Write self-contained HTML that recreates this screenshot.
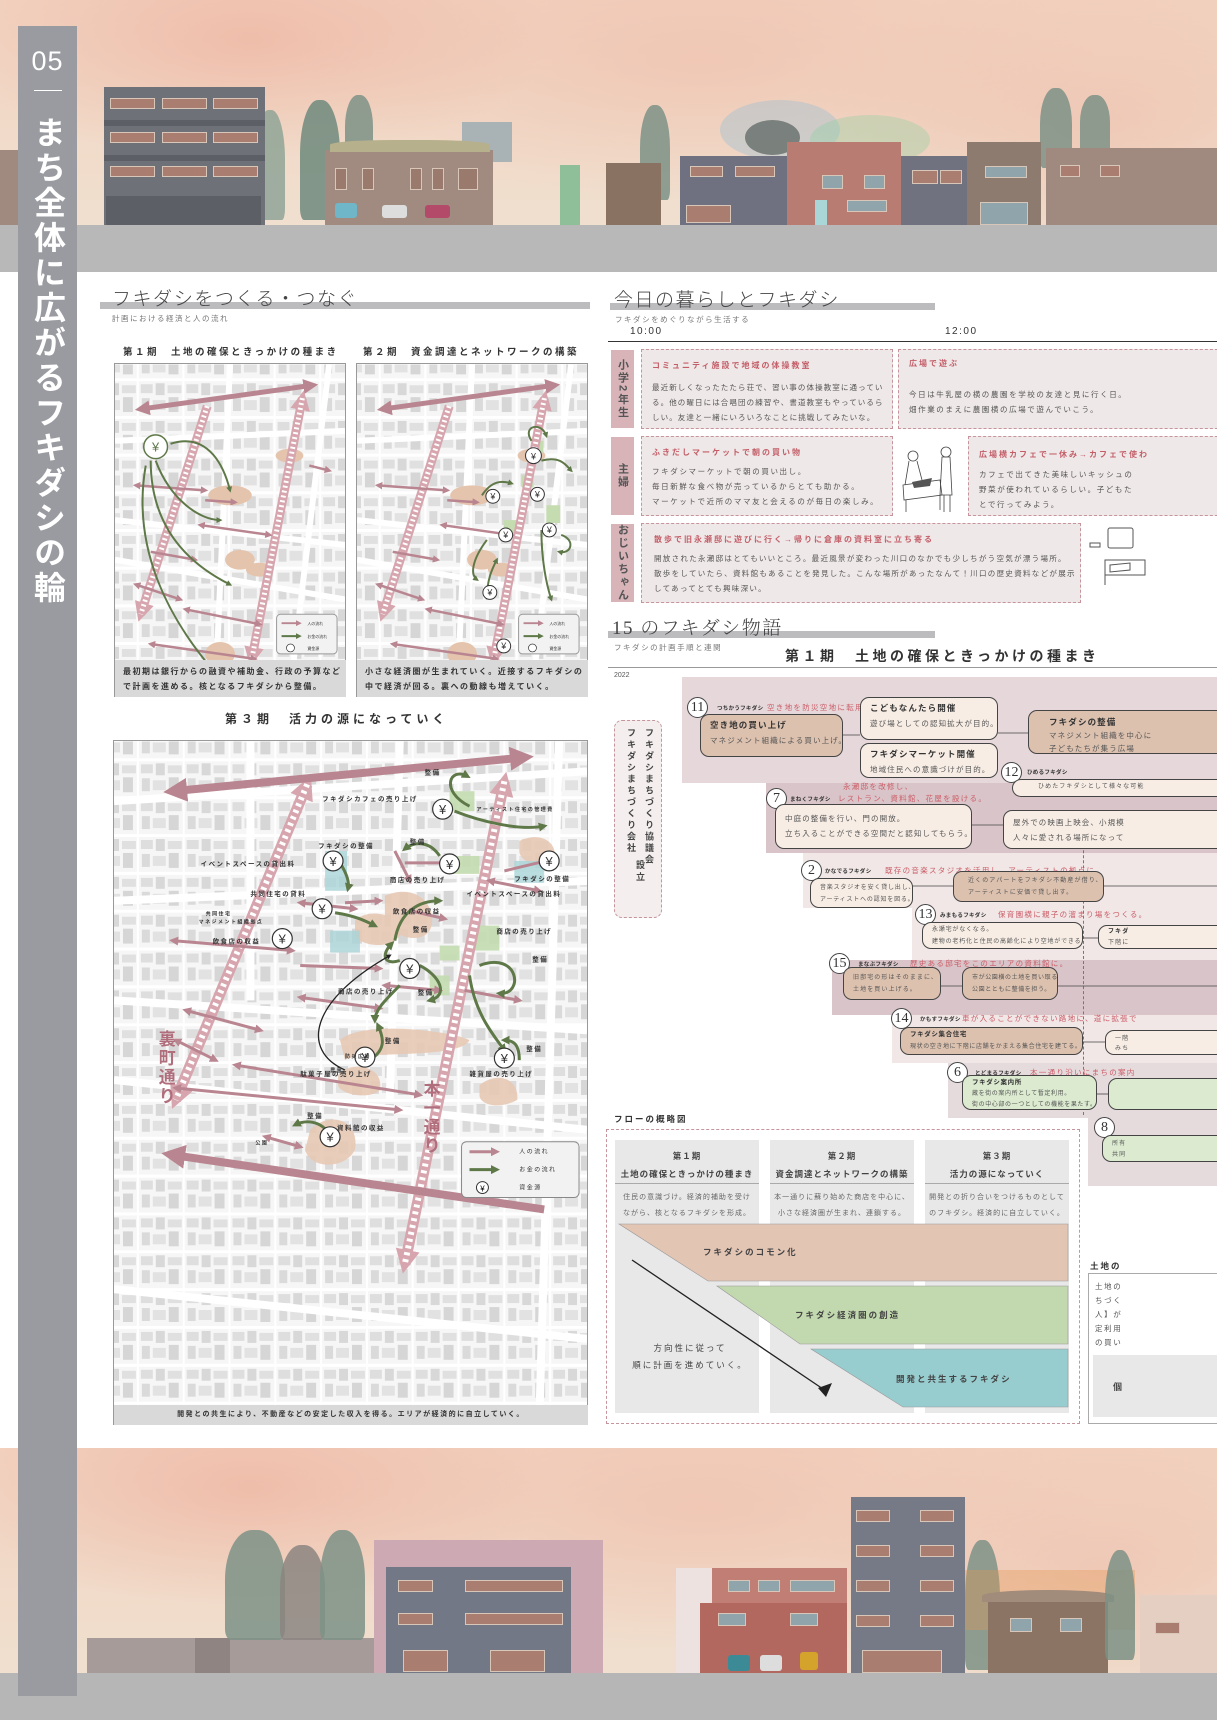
<!DOCTYPE html>
<html><head><meta charset="utf-8">
<style>
*{margin:0;padding:0;box-sizing:border-box}
html,body{width:1217px;height:1720px;overflow:hidden;background:#fff}
body{position:relative;font-family:"Liberation Sans","Noto Sans CJK JP",sans-serif;color:#333}
.a{position:absolute}
.sky{position:absolute;left:0;width:1217px;background:
radial-gradient(ellipse 300px 120px at 250px 40px,rgba(236,170,150,.55),transparent),
radial-gradient(ellipse 400px 140px at 700px 60px,rgba(238,185,165,.5),transparent),
radial-gradient(ellipse 300px 150px at 1100px 120px,rgba(236,175,155,.4),transparent),
linear-gradient(#f2d2c0,#f1dccb 60%,#efe2d2)}
.bld{position:absolute}
.win{position:absolute;background:#a97e70;border:1px solid #d8c6b8}
.tree{position:absolute;border-radius:45% 45% 10% 10%;background:#7d9286;opacity:.85}
.side{position:absolute;left:18px;top:26px;width:59px;height:1670px;background:#999ba0;color:#fff;text-align:center}
.h2{position:absolute;font-size:19px;letter-spacing:1.5px;color:#444;font-weight:300;white-space:nowrap}
.bar{position:absolute;height:7px;background:#bcbcbf}
.sub{position:absolute;font-size:7.5px;color:#777;letter-spacing:1.5px;white-space:nowrap}
.t{position:absolute;white-space:nowrap}
.lab{position:absolute;width:23px;background:#d8b4b9;color:#555;font-size:11px;font-weight:bold;writing-mode:vertical-rl;display:flex;align-items:center;justify-content:center;letter-spacing:2px}
.db{position:absolute;border:1px dashed #c5949c;background:#efe8e8}
.db .hd{position:absolute;color:#c35e68;font-size:8px;letter-spacing:2px;font-weight:bold;white-space:nowrap}
.db .bd{position:absolute;color:#555;font-size:7.5px;letter-spacing:1.6px;line-height:15px;white-space:nowrap}
.bx{position:absolute;border:1.2px solid #444;border-radius:9px;font-size:7.5px;color:#555;letter-spacing:1.1px;line-height:15px;padding:3px 0 0 9px;white-space:nowrap;overflow:hidden}
.br{background:#dcc1af}.cr{background:#f7ede5}.gr{background:#dcebd0}
.bx b{color:#333;font-size:8.5px}
.num{position:absolute;width:21px;height:21px;border:1px solid #444;border-radius:50%;background:#fff;font-family:"Liberation Serif",serif;font-size:14px;text-align:center;line-height:19px;color:#333}
.nm{position:absolute;font-size:5.5px;font-weight:bold;color:#333;letter-spacing:.3px;white-space:nowrap}
.rd{position:absolute;font-size:7.5px;color:#cc5d68;letter-spacing:1.3px;white-space:nowrap}
.band{position:absolute}
.mt{position:absolute;font-size:9.5px;font-weight:bold;letter-spacing:2.5px;color:#333;white-space:nowrap}
.cap{position:absolute;background:#d9d9d9;font-size:8px;font-weight:bold;letter-spacing:1.5px;line-height:15px;padding:4px 8px;color:#333;white-space:nowrap}
.col{position:absolute;background:#e8e8e9;top:1140px;height:273px;width:144px;text-align:center}
.col .h{font-size:8.5px;letter-spacing:1px;font-weight:bold;color:#444;line-height:18px;padding-top:7px;height:44px;border-bottom:1px solid #aaa;white-space:nowrap}
.col .p{font-size:7px;letter-spacing:1px;color:#666;line-height:16px;padding-top:6px;white-space:nowrap}
</style></head><body>

<svg width="0" height="0" style="position:absolute">
<defs>
<pattern id="blk" width="46" height="38" patternUnits="userSpaceOnUse">
<rect width="46" height="38" fill="#f6f6f6"/>
<rect x="2" y="3" width="12" height="9" fill="#dedede"/><rect x="17" y="2" width="9" height="12" fill="#d8d8d8"/>
<rect x="29" y="4" width="14" height="8" fill="#e0e0e0"/><rect x="3" y="17" width="8" height="13" fill="#dadada"/>
<rect x="14" y="19" width="13" height="10" fill="#e2e2e2"/><rect x="30" y="16" width="10" height="15" fill="#d6d6d6"/>
<rect x="0" y="35" width="46" height="3" fill="#fff"/><rect x="44" y="0" width="2" height="38" fill="#fff"/>
</pattern>
<marker id="pa" viewBox="0 0 10 10" refX="6" refY="5" markerWidth="3" markerHeight="3" orient="auto-start-reverse"><path d="M0,0L10,5L0,10z" fill="#b98590"/></marker>
<marker id="ga" viewBox="0 0 10 10" refX="6" refY="5" markerWidth="3" markerHeight="3" orient="auto-start-reverse"><path d="M0,0L10,5L0,10z" fill="#5e7848"/></marker>
<marker id="da" viewBox="0 0 10 10" refX="6" refY="5" markerWidth="2.2" markerHeight="2.6" orient="auto-start-reverse"><path d="M0,0L10,5L0,10z" fill="#d7a5ae"/></marker>
<marker id="ka" viewBox="0 0 10 10" refX="6" refY="5" markerWidth="4" markerHeight="4" orient="auto"><path d="M0,0L10,5L0,10z" fill="#222"/></marker>
</defs></svg>

<!-- TOP BANNER -->
<div class="sky" style="top:0;height:272px"></div>
<div class="a" style="left:0;top:225px;width:1217px;height:47px;background:#b8b8b8"></div>
<div class="tree" style="left:255px;top:110px;width:30px;height:110px;background:#8fa497"></div>
<div class="tree" style="left:300px;top:100px;width:40px;height:120px;background:#6f8a7c"></div>
<div class="tree" style="left:345px;top:95px;width:28px;height:70px"></div>
<div class="bld" style="left:104px;top:87px;width:161px;height:138px;background:#6f7179"></div>
<div class="bld" style="left:104px;top:120px;width:161px;height:6px;background:#5d5f66"></div>
<div class="bld" style="left:104px;top:155px;width:161px;height:6px;background:#5d5f66"></div>
<div class="win" style="left:110px;top:98px;width:45px;height:11px"></div><div class="win" style="left:162px;top:98px;width:45px;height:11px"></div><div class="win" style="left:213px;top:98px;width:45px;height:11px"></div>
<div class="win" style="left:110px;top:132px;width:45px;height:11px"></div><div class="win" style="left:162px;top:132px;width:45px;height:11px"></div><div class="win" style="left:213px;top:132px;width:45px;height:11px"></div>
<div class="win" style="left:110px;top:166px;width:45px;height:11px"></div><div class="win" style="left:162px;top:166px;width:45px;height:11px"></div><div class="win" style="left:213px;top:166px;width:45px;height:11px"></div>
<div class="bld" style="left:106px;top:196px;width:155px;height:29px;background:#5d5f67"></div>
<div class="bld" style="left:462px;top:122px;width:50px;height:40px;background:#a9b2b5"></div>
<div class="bld" style="left:325px;top:150px;width:168px;height:75px;background:#a18b80"></div>
<div class="bld" style="left:330px;top:140px;width:160px;height:12px;background:#b7b08c;border-radius:40% 40% 0 0"></div>
<div class="win" style="left:335px;top:168px;width:12px;height:22px;background:#9b7a6e"></div><div class="win" style="left:362px;top:168px;width:12px;height:22px;background:#9b7a6e"></div><div class="win" style="left:410px;top:168px;width:12px;height:22px;background:#9b7a6e"></div><div class="win" style="left:432px;top:168px;width:12px;height:22px;background:#9b7a6e"></div><div class="win" style="left:458px;top:168px;width:20px;height:22px;background:#9b7a6e"></div>
<div class="bld" style="left:335px;top:203px;width:22px;height:15px;background:#6fb6c8;border-radius:3px"></div>
<div class="bld" style="left:382px;top:205px;width:25px;height:13px;background:#ddd;border-radius:3px"></div>
<div class="bld" style="left:425px;top:205px;width:25px;height:13px;background:#b44a6a;border-radius:3px"></div>
<div class="bld" style="left:560px;top:165px;width:20px;height:60px;background:#8fbf98"></div>
<div class="a" style="left:720px;top:100px;width:120px;height:60px;border-radius:50%;background:rgba(140,190,215,.35)"></div>
<div class="a" style="left:810px;top:115px;width:120px;height:50px;border-radius:50%;background:rgba(140,210,160,.35)"></div>
<div class="tree" style="left:745px;top:120px;width:55px;height:35px;border-radius:50%;background:#6b7370"></div>
<div class="tree" style="left:640px;top:105px;width:30px;height:95px"></div>
<div class="tree" style="left:1040px;top:88px;width:32px;height:80px"></div>
<div class="tree" style="left:1080px;top:95px;width:30px;height:60px"></div>
<div class="bld" style="left:606px;top:163px;width:55px;height:62px;background:#8a7262"></div>
<div class="bld" style="left:680px;top:156px;width:107px;height:69px;background:#6f7180"></div>
<div class="win" style="left:690px;top:166px;width:33px;height:11px"></div><div class="win" style="left:735px;top:166px;width:40px;height:11px"></div>
<div class="win" style="left:686px;top:205px;width:45px;height:18px"></div>
<div class="bld" style="left:787px;top:142px;width:114px;height:83px;background:#b97c73"></div>
<div class="win" style="left:822px;top:175px;width:21px;height:14px;background:#8fa5ab"></div><div class="win" style="left:864px;top:175px;width:21px;height:14px;background:#8fa5ab"></div>
<div class="win" style="left:847px;top:200px;width:40px;height:12px;background:#8fa5ab"></div>
<div class="bld" style="left:815px;top:200px;width:12px;height:25px;background:#a9d6d6"></div>
<div class="bld" style="left:901px;top:156px;width:66px;height:69px;background:#707280"></div>
<div class="win" style="left:912px;top:170px;width:26px;height:14px"></div><div class="win" style="left:940px;top:170px;width:22px;height:14px"></div>
<div class="bld" style="left:967px;top:142px;width:74px;height:83px;background:#8c7b6e"></div>
<div class="win" style="left:985px;top:166px;width:42px;height:12px;background:#8fa5ab"></div>
<div class="win" style="left:980px;top:202px;width:48px;height:23px;background:#8fa5ab"></div>
<div class="bld" style="left:1046px;top:148px;width:171px;height:77px;background:#a08a80"></div>
<div class="win" style="left:1060px;top:165px;width:20px;height:12px"></div><div class="win" style="left:1100px;top:165px;width:20px;height:12px"></div>
<div class="bld" style="left:0;top:150px;width:18px;height:75px;background:#a08a80"></div>

<!-- BOTTOM BANNER -->
<div class="sky" style="top:1448px;height:272px"></div>
<div class="a" style="left:0;top:1673px;width:1217px;height:47px;background:#b6b6b6"></div>
<div class="bld" style="left:87px;top:1638px;width:300px;height:35px;background:#a69b99"></div>
<div class="bld" style="left:195px;top:1638px;width:35px;height:35px;background:#8f8482"></div>
<div class="tree" style="left:225px;top:1530px;width:60px;height:110px"></div>
<div class="tree" style="left:280px;top:1545px;width:45px;height:95px;background:#8b8580"></div>
<div class="tree" style="left:320px;top:1530px;width:45px;height:110px"></div>
<div class="bld" style="left:374px;top:1540px;width:229px;height:133px;background:#cda9b3"></div>
<div class="bld" style="left:386px;top:1567px;width:185px;height:106px;background:#727886"></div>
<div class="win" style="left:398px;top:1580px;width:35px;height:12px;background:#a97e70"></div><div class="win" style="left:465px;top:1580px;width:98px;height:12px"></div>
<div class="win" style="left:398px;top:1613px;width:35px;height:12px"></div><div class="win" style="left:465px;top:1613px;width:98px;height:12px"></div>
<div class="win" style="left:403px;top:1650px;width:45px;height:22px"></div><div class="win" style="left:490px;top:1650px;width:55px;height:22px"></div>
<div class="bld" style="left:676px;top:1568px;width:36px;height:105px;background:#ede2e0"></div>
<div class="bld" style="left:712px;top:1568px;width:135px;height:105px;background:#c07e74"></div>
<div class="bld" style="left:700px;top:1603px;width:147px;height:70px;background:#b3685f"></div>
<div class="win" style="left:728px;top:1580px;width:22px;height:12px;background:#8fa5ab"></div><div class="win" style="left:758px;top:1580px;width:22px;height:12px;background:#8fa5ab"></div><div class="win" style="left:790px;top:1580px;width:45px;height:12px;background:#8fa5ab"></div>
<div class="win" style="left:718px;top:1613px;width:28px;height:13px;background:#8fa5ab"></div><div class="win" style="left:790px;top:1613px;width:28px;height:13px;background:#8fa5ab"></div>
<div class="bld" style="left:851px;top:1497px;width:114px;height:176px;background:#767a86"></div>
<div class="win" style="left:856px;top:1510px;width:34px;height:12px"></div><div class="win" style="left:920px;top:1510px;width:34px;height:12px"></div>
<div class="win" style="left:856px;top:1545px;width:34px;height:12px"></div><div class="win" style="left:920px;top:1545px;width:34px;height:12px"></div>
<div class="win" style="left:856px;top:1580px;width:34px;height:12px"></div><div class="win" style="left:920px;top:1580px;width:34px;height:12px"></div>
<div class="win" style="left:856px;top:1615px;width:34px;height:12px"></div><div class="win" style="left:920px;top:1615px;width:34px;height:12px"></div>
<div class="win" style="left:862px;top:1650px;width:80px;height:23px"></div>
<div class="tree" style="left:965px;top:1540px;width:35px;height:130px"></div>
<div class="bld" style="left:965px;top:1570px;width:170px;height:60px;background:rgba(230,150,80,.35)"></div>
<div class="bld" style="left:988px;top:1600px;width:120px;height:73px;background:#8b7464"></div>
<div class="bld" style="left:982px;top:1590px;width:132px;height:12px;background:#a18b7a;border-radius:50% 50% 0 0"></div>
<div class="win" style="left:1010px;top:1618px;width:22px;height:14px;background:#8fa5ab"></div><div class="win" style="left:1060px;top:1618px;width:22px;height:14px;background:#8fa5ab"></div>
<div class="tree" style="left:1105px;top:1550px;width:30px;height:110px"></div>
<div class="bld" style="left:1140px;top:1595px;width:77px;height:78px;background:#e4cfc2"></div>
<div class="win" style="left:1155px;top:1622px;width:25px;height:12px"></div>
<div class="a" style="left:728px;top:1655px;width:22px;height:16px;background:#3d8a97;border-radius:3px"></div>
<div class="a" style="left:760px;top:1655px;width:22px;height:16px;background:#ddd;border-radius:3px"></div>
<div class="a" style="left:800px;top:1652px;width:18px;height:18px;background:#d4a32c;border-radius:3px"></div>

<!-- SIDEBAR -->
<div class="side">
<div style="font-size:27px;margin-top:20px;letter-spacing:1px">05</div>
<div style="width:28px;height:1px;background:#fff;margin:13px auto 0"></div>
<div style="writing-mode:vertical-rl;font-size:32px;font-weight:bold;letter-spacing:3px;margin:10px auto 0;line-height:59px;height:520px">まち全体に広がるフキダシの輪</div>
</div>

<!-- LEFT SECTION -->
<div class="bar" style="left:100px;top:302px;width:490px"></div>
<div class="h2" style="left:112px;top:284px">フキダシをつくる・つなぐ</div>
<div class="sub" style="left:112px;top:313px">計画における経済と人の流れ</div>
<div class="mt" style="left:123px;top:344px">第１期　土地の確保ときっかけの種まき</div>
<div class="mt" style="left:363px;top:344px">第２期　資金調達とネットワークの構築</div>

<!-- map1 -->
<svg class="a" style="left:114px;top:363px;border:1px solid #999" width="232" height="334" viewBox="114 363 232 334">
<rect x="114" y="363" width="232" height="334" fill="url(#blk)"/>
<g stroke="#fff" stroke-width="6" fill="none"><path d="M114,440 L346,430"/><path d="M114,520 L346,545"/><path d="M114,560 L346,600"/><path d="M230,363 L215,697"/><path d="M330,363 L290,697"/></g>
<g fill="#e5c4ad"><ellipse cx="230" cy="495" rx="22" ry="10"/><ellipse cx="240" cy="560" rx="15" ry="10"/><ellipse cx="290" cy="455" rx="14" ry="7"/><ellipse cx="220" cy="655" rx="15" ry="12"/><ellipse cx="260" cy="570" rx="14" ry="7"/></g>
<path d="M207,405 L140,615" stroke="#d7a5ae" stroke-width="9" marker-end="url(#da)"/><path d="M207,405 L140,615" stroke="#fff" stroke-width="5" stroke-dasharray="2 3"/>
<path d="M303,397 L252,660" stroke="#d7a5ae" stroke-width="9" marker-end="url(#da)" marker-start="url(#da)"/><path d="M303,397 L252,660" stroke="#fff" stroke-width="5" stroke-dasharray="2 3"/>
<g stroke="#b98590" fill="none"><path d="M140,408 L313,384" stroke-width="5" marker-end="url(#pa)" marker-start="url(#pa)"/>
<g stroke-width="2.5"><path d="M135,485 L205,490" marker-end="url(#pa)" marker-start="url(#pa)"/><path d="M205,500 L235,502" marker-end="url(#pa)"/><path d="M200,525 L270,535" marker-end="url(#pa)" marker-start="url(#pa)"/><path d="M150,552 L195,560" marker-end="url(#pa)"/><path d="M135,585 L180,600" marker-end="url(#pa)" marker-start="url(#pa)"/><path d="M185,610 L260,625" marker-end="url(#pa)" marker-start="url(#pa)"/><path d="M150,645 L255,660" marker-end="url(#pa)" marker-start="url(#pa)"/><path d="M310,465 L330,470" marker-end="url(#pa)"/></g>
<path d="M120,690 L200,680" stroke-width="5" marker-start="url(#pa)"/></g>
<g stroke="#5e7848" stroke-width="2" fill="none"><path d="M170,443 C210,430 225,470 230,490" marker-end="url(#ga)"/><path d="M150,460 C150,520 180,560 230,585" marker-end="url(#ga)"/><path d="M145,465 C130,550 170,620 210,668" marker-end="url(#ga)"/><path d="M155,460 C170,500 200,520 220,520" marker-end="url(#ga)"/></g>
<circle cx="155" cy="446" r="12" fill="#fff" stroke="#5e7848" stroke-width="1.5"/><text x="155" y="451" font-size="13" text-anchor="middle" fill="#5e7848">¥</text>
<rect x="277" y="615" width="61" height="40" rx="4" fill="#f2f2f2" stroke="#999"/>
<path d="M282,624 L300,624" stroke="#b98590" stroke-width="2" marker-end="url(#pa)"/><path d="M282,637 L300,637" stroke="#5e7848" stroke-width="2" marker-end="url(#ga)"/>
<circle cx="291" cy="649" r="4" fill="#fff" stroke="#333" stroke-width=".7"/>
<g font-size="4" fill="#333"><text x="308" y="626">人の流れ</text><text x="308" y="639">お金の流れ</text><text x="308" y="651">資金源</text></g>
</svg>
<div class="cap" style="left:115px;top:660px;width:231px;height:37px">最初期は銀行からの融資や補助金、行政の予算など<br>で計画を進める。核となるフキダシから整備。</div>

<!-- map2 -->
<svg class="a" style="left:356px;top:363px;border:1px solid #999" width="232" height="334" viewBox="114 363 232 334">
<rect x="114" y="363" width="232" height="334" fill="url(#blk)"/>
<g stroke="#fff" stroke-width="6" fill="none"><path d="M114,440 L346,430"/><path d="M114,520 L346,545"/><path d="M114,560 L346,600"/><path d="M230,363 L215,697"/><path d="M330,363 L290,697"/></g>
<g fill="#e5c4ad"><ellipse cx="230" cy="495" rx="22" ry="10"/><ellipse cx="240" cy="560" rx="15" ry="10"/><ellipse cx="290" cy="455" rx="14" ry="7"/><ellipse cx="220" cy="655" rx="15" ry="12"/><ellipse cx="260" cy="570" rx="14" ry="7"/></g>
<g fill="#c5dcb0"><rect x="290" y="440" width="12" height="12"/><rect x="280" y="475" width="12" height="12"/><rect x="305" y="505" width="14" height="18"/><rect x="262" y="520" width="14" height="15"/></g>
<path d="M207,405 L140,615" stroke="#d7a5ae" stroke-width="9" marker-end="url(#da)"/><path d="M207,405 L140,615" stroke="#fff" stroke-width="5" stroke-dasharray="2 3"/>
<path d="M303,397 L252,660" stroke="#d7a5ae" stroke-width="9" marker-end="url(#da)" marker-start="url(#da)"/><path d="M303,397 L252,660" stroke="#fff" stroke-width="5" stroke-dasharray="2 3"/>
<g stroke="#b98590" fill="none"><path d="M140,408 L313,384" stroke-width="5" marker-end="url(#pa)" marker-start="url(#pa)"/>
<g stroke-width="2.5"><path d="M135,485 L205,490" marker-end="url(#pa)" marker-start="url(#pa)"/><path d="M205,500 L235,502" marker-end="url(#pa)"/><path d="M200,525 L270,535" marker-end="url(#pa)" marker-start="url(#pa)"/><path d="M150,552 L195,560" marker-end="url(#pa)"/><path d="M135,585 L180,600" marker-end="url(#pa)" marker-start="url(#pa)"/><path d="M185,610 L260,625" marker-end="url(#pa)" marker-start="url(#pa)"/><path d="M150,645 L255,660" marker-end="url(#pa)" marker-start="url(#pa)"/></g>
<path d="M120,690 L200,680" stroke-width="5" marker-start="url(#pa)"/></g>
<g stroke="#5e7848" stroke-width="2" fill="none"><path d="M290,440 C280,425 300,420 305,435" marker-end="url(#ga)"/><path d="M300,460 C320,455 325,465 330,470" marker-end="url(#ga)"/><path d="M240,495 C250,480 260,480 270,483" marker-end="url(#ga)"/><path d="M245,540 C230,560 228,575 235,580" marker-end="url(#ga)"/><path d="M245,600 C245,580 250,570 255,560" marker-end="url(#ga)"/><path d="M300,530 C300,560 305,585 310,600" marker-end="url(#ga)"/><path d="M320,535 C335,540 330,555 318,552" marker-end="url(#ga)"/></g>
<g fill="#fff" stroke="#333" stroke-width="1"><circle cx="292" cy="455" r="8"/><circle cx="296" cy="494" r="7"/><circle cx="251" cy="496" r="7"/><circle cx="264" cy="535" r="7"/><circle cx="308" cy="530" r="7"/><circle cx="248" cy="593" r="7"/><circle cx="262" cy="647" r="7"/></g>
<g font-size="9" text-anchor="middle" fill="#333"><text x="292" y="459">¥</text><text x="296" y="497">¥</text><text x="251" y="499">¥</text><text x="264" y="538">¥</text><text x="308" y="533">¥</text><text x="248" y="596">¥</text><text x="262" y="650">¥</text></g>
<rect x="277" y="615" width="61" height="40" rx="4" fill="#f2f2f2" stroke="#999"/>
<path d="M282,624 L300,624" stroke="#b98590" stroke-width="2" marker-end="url(#pa)"/><path d="M282,637 L300,637" stroke="#5e7848" stroke-width="2" marker-end="url(#ga)"/>
<circle cx="291" cy="649" r="4" fill="#fff" stroke="#333" stroke-width=".7"/>
<g font-size="4" fill="#333"><text x="308" y="626">人の流れ</text><text x="308" y="639">お金の流れ</text><text x="308" y="651">資金源</text></g>
</svg>
<div class="cap" style="left:357px;top:660px;width:231px;height:37px">小さな経済圏が生まれていく。近接するフキダシの<br>中で経済が回る。裏への動線も増えていく。</div>

<div class="mt" style="left:225px;top:710px;font-size:12px;letter-spacing:4px">第３期　活力の源になっていく</div>

<!-- map3 -->
<svg class="a" style="left:113px;top:740px;border:1px solid #999" width="475" height="685" viewBox="113 740 475 685">
<rect x="113" y="740" width="475" height="685" fill="url(#blk)"/>
<g stroke="#fff" stroke-width="8" fill="none"><path d="M113,800 L588,770"/><path d="M113,900 L588,880"/><path d="M113,1000 L588,1030"/><path d="M113,1080 L588,1130"/><path d="M113,1290 L588,1340"/><path d="M250,740 L250,1000"/><path d="M400,740 L390,1100"/><path d="M560,740 L540,1425"/></g>
<g fill="#e8c9b5" opacity=".9"><path d="M385,895 C420,880 440,910 430,930 C420,945 390,935 385,920z"/><path d="M355,920 C370,905 405,915 400,935 C390,950 360,945 355,935z"/><path d="M340,1040 C360,1020 450,1030 470,1040 C460,1060 360,1050 345,1060z"/><path d="M338,1075 C350,1060 385,1065 380,1090 C370,1100 340,1095 338,1085z"/><path d="M310,1130 C330,1110 360,1120 355,1150 C345,1170 310,1170 305,1150z"/><path d="M480,1085 C500,1070 520,1080 518,1100 C500,1110 480,1105 480,1095z"/><path d="M520,840 C540,830 560,840 555,860 C540,870 520,860 520,850z"/></g>
<g fill="#a9d4d8" opacity=".8"><rect x="325" y="850" width="22" height="40"/><rect x="330" y="930" width="30" height="22"/><rect x="515" y="860" width="30" height="22"/></g>
<g fill="#c4dcb0" opacity=".9"><rect x="450" y="790" width="25" height="20"/><rect x="450" y="855" width="30" height="18"/><rect x="470" y="925" width="30" height="25"/><rect x="430" y="975" width="20" height="20"/><rect x="440" y="945" width="20" height="15"/></g>
<path d="M307,783 L175,1100" stroke="#d7a5ae" stroke-width="11" marker-end="url(#da)" marker-start="url(#da)"/><path d="M307,783 L175,1100" stroke="#fff" stroke-width="6" stroke-dasharray="3 4"/>
<path d="M505,780 L405,1265" stroke="#d7a5ae" stroke-width="11" marker-end="url(#da)" marker-start="url(#da)"/><path d="M505,780 L405,1265" stroke="#fff" stroke-width="6" stroke-dasharray="3 4"/>
<g stroke="#b98590" fill="none">
<path d="M172,790 L525,756" stroke-width="8" marker-end="url(#pa)" marker-start="url(#pa)"/>
<path d="M170,1155 L545,1210" stroke-width="8" marker-start="url(#pa)"/>
<g stroke-width="3"><path d="M175,1088 L400,1110" marker-end="url(#pa)" marker-start="url(#pa)"/><path d="M172,940 L292,950" marker-end="url(#pa)" marker-start="url(#pa)"/><path d="M175,1040 L215,1060" marker-end="url(#pa)" marker-start="url(#pa)"/><path d="M185,1010 L260,1030" marker-end="url(#pa)" marker-start="url(#pa)"/><path d="M235,1065 L420,1095" marker-end="url(#pa)" marker-start="url(#pa)"/><path d="M300,902 L355,908" marker-end="url(#pa)" marker-start="url(#pa)"/><path d="M345,902 L380,900" marker-end="url(#pa)"/><path d="M410,910 L445,918" marker-end="url(#pa)"/><path d="M300,965 L380,968" marker-end="url(#pa)"/><path d="M300,997 L380,1008" marker-end="url(#pa)" marker-start="url(#pa)"/><path d="M385,985 L440,990" marker-end="url(#pa)" marker-start="url(#pa)"/><path d="M490,880 L540,890" marker-end="url(#pa)" marker-start="url(#pa)"/><path d="M505,870 L555,858" marker-end="url(#pa)"/><path d="M465,990 L520,1000" marker-end="url(#pa)"/><path d="M265,1137 L300,1147" marker-end="url(#pa)" marker-start="url(#pa)"/><path d="M395,850 L410,880" marker-end="url(#pa)"/><path d="M405,862 L450,862" marker-end="url(#pa)"/></g></g>
<g stroke="#5e7848" stroke-width="3" fill="none">
<path d="M470,805 C440,790 450,765 468,775" marker-end="url(#ga)"/><path d="M455,810 C480,820 520,830 545,825" marker-end="url(#ga)"/>
<path d="M440,855 C430,840 415,840 405,848" marker-end="url(#ga)"/><path d="M340,862 C345,870 350,880 348,888" marker-end="url(#ga)"/>
<path d="M395,940 C400,910 420,900 440,900" marker-end="url(#ga)"/><path d="M335,912 C355,915 365,920 375,925" marker-end="url(#ga)"/>
<path d="M400,960 C385,965 380,955 392,943" marker-end="url(#ga)"/><path d="M420,965 C440,975 450,995 430,1000" marker-end="url(#ga)"/><path d="M400,985 C385,1000 375,1010 375,1020" marker-end="url(#ga)"/>
<path d="M480,965 C520,950 525,995 500,993" marker-end="url(#ga)"/><path d="M470,975 C475,1010 490,1030 505,1050" marker-end="url(#ga)"/>
<path d="M370,1060 C385,1050 385,1040 378,1025" marker-end="url(#ga)"/><path d="M520,1060 C520,1045 515,1040 505,1040" marker-end="url(#ga)"/>
<path d="M330,1135 C320,1120 305,1120 295,1125" marker-end="url(#ga)"/></g>
<path d="M345,1070 C300,1050 310,1000 390,955" stroke="#222" stroke-width="1.3" fill="none" marker-end="url(#ka)"/>
<g fill="#fff" stroke="#333" stroke-width="1.2"><circle cx="443" cy="808" r="10"/><circle cx="333" cy="860" r="10"/><circle cx="450" cy="863" r="10"/><circle cx="550" cy="860" r="10"/><circle cx="322" cy="908" r="10"/><circle cx="282" cy="938" r="10"/><circle cx="410" cy="968" r="10"/><circle cx="365" cy="1057" r="10"/><circle cx="505" cy="1058" r="10"/><circle cx="330" cy="1137" r="10"/></g>
<g font-size="13" text-anchor="middle" fill="#333"><text x="443" y="813">¥</text><text x="333" y="865">¥</text><text x="450" y="868">¥</text><text x="550" y="865">¥</text><text x="322" y="913">¥</text><text x="282" y="943">¥</text><text x="410" y="973">¥</text><text x="365" y="1062">¥</text><text x="505" y="1063">¥</text><text x="330" y="1142">¥</text></g>
<g font-size="6.5" font-weight="bold" fill="#333" letter-spacing="1.5">
<text x="425" y="773">整備</text><text x="322" y="800">フキダシカフェの売り上げ</text><text x="477" y="810" font-size="5">アーティスト住宅の管理費</text>
<text x="318" y="847">フキダシの整備</text><text x="410" y="843">整備</text><text x="200" y="865">イベントスペースの貸出料</text>
<text x="390" y="881">商店の売り上げ</text><text x="515" y="880">フキダシの整備</text><text x="250" y="895">共同住宅の貸料</text>
<text x="467" y="895">イベントスペースの貸出料</text><text x="393" y="913">飲食店の収益</text><text x="413" y="931">整備</text>
<text x="497" y="933">商店の売り上げ</text><text x="212" y="943">飲食店の収益</text><text x="533" y="961">整備</text>
<text x="338" y="993">商店の売り上げ</text><text x="418" y="994">整備</text><text x="385" y="1043">整備</text>
<text x="527" y="1051">整備</text><text x="300" y="1076">駄菓子屋の売り上げ</text><text x="470" y="1076">雑貨屋の売り上げ</text>
<text x="307" y="1118">整備</text><text x="337" y="1130">資料館の収益</text><text x="255" y="1145" font-size="5">公園</text>
<text x="205" y="915" font-size="5">共同住宅</text><text x="198" y="923" font-size="5">マネジメント組織拠点</text>
<text x="345" y="1058" font-size="5">防災広場</text><text x="330" y="1072" font-size="5">農園</text>
</g>
<g font-size="17" font-weight="bold" fill="#b06e7c"><text x="158" y="1045">裏</text><text x="158" y="1064">町</text><text x="158" y="1083">通</text><text x="158" y="1102">り</text>
<text x="424" y="1095">本</text><text x="424" y="1114">一</text><text x="424" y="1133">通</text><text x="424" y="1152">り</text></g>
<rect x="462" y="1142" width="118" height="56" rx="5" fill="#f2f2f2" stroke="#888"/>
<path d="M470,1152 L497,1152" stroke="#b98590" stroke-width="3" marker-end="url(#pa)"/><path d="M470,1170 L497,1170" stroke="#5e7848" stroke-width="3" marker-end="url(#ga)"/>
<circle cx="483" cy="1188" r="6" fill="#fff" stroke="#333"/><text x="483" y="1192" font-size="8" text-anchor="middle">¥</text>
<g font-size="6" fill="#333" letter-spacing="1.5"><text x="520" y="1154">人の流れ</text><text x="520" y="1172">お金の流れ</text><text x="520" y="1190">資金源</text></g>
</svg>
<div class="cap" style="left:114px;top:1405px;width:474px;height:20px;padding-top:2px;text-align:center;font-size:7px">開発との共生により、不動産などの安定した収入を得る。エリアが経済的に自立していく。</div>

<!-- RIGHT: 今日の暮らし -->
<div class="bar" style="left:610px;top:303px;width:325px"></div>
<div class="h2" style="left:614px;top:285px">今日の暮らしとフキダシ</div>
<div class="sub" style="left:615px;top:314px">フキダシをめぐりながら生活する</div>
<div class="t" style="left:630px;top:326px;font-size:10px;letter-spacing:1.5px">10:00</div>
<div class="t" style="left:945px;top:326px;font-size:10px;letter-spacing:1.5px">12:00</div>
<div class="a" style="left:608px;top:341px;width:609px;height:1px;background:#333"></div>

<div class="lab" style="left:611px;top:350px;height:78px">小学2年生</div>
<div class="db" style="left:641px;top:349px;width:252px;height:80px"><div class="hd" style="left:10px;top:10px">コミュニティ施設で地域の体操教室</div><div class="bd" style="left:10px;top:30px;letter-spacing:1.1px">最近新しくなったたたら荘で、習い事の体操教室に通ってい<br>る。他の曜日には合唱団の練習や、書道教室もやっているら<br>しい。友達と一緒にいろいろなことに挑戦してみたいな。</div></div>
<div class="db" style="left:898px;top:349px;width:330px;height:80px"><div class="hd" style="left:10px;top:8px">広場で遊ぶ</div><div class="bd" style="left:10px;top:37px">今日は牛乳屋の横の農園を学校の友達と見に行く日。<br>畑作業のまえに農園横の広場で遊んでいこう。</div></div>
<div class="lab" style="left:611px;top:437px;height:78px">主婦</div>
<div class="db" style="left:641px;top:436px;width:252px;height:80px"><div class="hd" style="left:10px;top:10px">ふきだしマーケットで朝の買い物</div><div class="bd" style="left:10px;top:27px">フキダシマーケットで朝の買い出し。<br>毎日新鮮な食べ物が売っているからとても助かる。<br>マーケットで近所のママ友と会えるのが毎日の楽しみ。</div></div>
<svg class="a" style="left:900px;top:440px" width="60" height="75"><g fill="none" stroke="#444" stroke-width=".8"><circle cx="13" cy="16" r="5"/><path d="M9,21 L5,45 M17,21 L22,40"/><path d="M3,45 L40,40 L42,55 L4,60z"/><path d="M6,60 L6,72 M40,55 L40,70"/><circle cx="46" cy="12" r="5"/><path d="M42,17 L40,55 L52,55 L50,17z M44,55 L44,72 M50,55 L50,72"/></g><path d="M12,42 L32,38 L30,46 L14,48z" fill="#555"/></svg>
<div class="db" style="left:968px;top:436px;width:260px;height:80px"><div class="hd" style="left:10px;top:12px">広場横カフェで一休み→カフェで使わ</div><div class="bd" style="left:10px;top:30px">カフェで出てきた美味しいキッシュの<br>野菜が使われているらしい。子どもた<br>とで行ってみよう。</div></div>
<div class="lab" style="left:611px;top:524px;height:78px">おじいちゃん</div>
<div class="db" style="left:641px;top:523px;width:440px;height:80px"><div class="hd" style="left:12px;top:10px">散歩で旧永瀬邸に遊びに行く→帰りに倉庫の資料室に立ち寄る</div><div class="bd" style="left:12px;top:27px;letter-spacing:1.3px">開放された永瀬邸はとてもいいところ。最近風景が変わった川口のなかでも少しちがう空気が漂う場所。<br>散歩をしていたら、資料館もあることを発見した。こんな場所があったなんて！川口の歴史資料などが展示<br>してあってとても興味深い。</div></div>
<svg class="a" style="left:1085px;top:525px" width="132" height="80"><g fill="none" stroke="#555" stroke-width="1"><rect x="23" y="3" width="25" height="20" rx="2"/><rect x="5" y="18" width="10" height="4"/><rect x="20" y="35" width="40" height="15"/><path d="M20,35 L20,60 M25,40 L45,38 L45,45 L25,47z"/></g></svg>

<!-- 15 stories -->
<div class="bar" style="left:608px;top:631px;width:327px"></div>
<div class="h2" style="left:612px;top:613px;font-family:'Liberation Serif','Noto Serif CJK SC',serif">15 のフキダシ物語</div>
<div class="sub" style="left:614px;top:642px">フキダシの計画手順と連関</div>
<div class="t" style="left:785px;top:646px;font-size:14px;font-weight:bold;letter-spacing:3.5px;color:#333">第１期　土地の確保ときっかけの種まき</div>
<div class="a" style="left:608px;top:667px;width:609px;height:1px;background:#999"></div>
<div class="t" style="left:614px;top:672px;font-size:7px;color:#555">2022</div>
<div class="a" style="left:614px;top:720px;width:48px;height:198px;border:1px dashed #c5949c;border-radius:8px;background:#f4eeee"></div>
<div class="a" style="left:622px;top:728px;writing-mode:vertical-rl;font-size:9px;font-weight:bold;letter-spacing:2.5px;color:#444;line-height:18px;height:190px">フキダシまちづくり協議会<br>フキダシまちづくり会社</div>
<div class="a" style="left:634px;top:860px;writing-mode:vertical-rl;font-size:9px;font-weight:bold;letter-spacing:3px;color:#444">設立</div>

<div class="band" style="left:682px;top:677px;width:535px;height:106px;background:#e5d7da"></div>
<div class="band" style="left:766px;top:783px;width:451px;height:70px;background:#d9c5c9"></div>
<div class="band" style="left:803px;top:853px;width:414px;height:55px;background:#f0e7e6"></div>
<div class="band" style="left:912px;top:905px;width:305px;height:57px;background:#f0e7e6"></div>
<div class="band" style="left:832px;top:960px;width:385px;height:55px;background:#d9c5c9"></div>
<div class="band" style="left:892px;top:1015px;width:325px;height:48px;background:#f0e7e6"></div>
<div class="band" style="left:948px;top:1063px;width:269px;height:55px;background:#e5dadc"></div>
<div class="band" style="left:1088px;top:1118px;width:129px;height:68px;background:#e5dadc"></div>
<div class="a" style="left:1083px;top:815px;width:0;height:300px;border-left:1px dashed #777"></div>
<svg class="a" style="left:600px;top:670px" width="617" height="500"><g stroke="#444" stroke-width=".8"><path d="M243,65 L260,65"/><path d="M398,63 L428,63"/><path d="M372,155 L403,155"/><path d="M312,216 L353,216"/><path d="M504,216 L617,216"/><path d="M483,268 L498,268"/><path d="M341,316 L362,316"/><path d="M457,316 L617,316"/><path d="M483,372 L505,372"/><path d="M497,424 L508,424"/></g></svg>

<div class="num" style="left:687px;top:697px">11</div><div class="nm" style="left:717px;top:704px">つちかうフキダシ</div><div class="rd" style="left:767px;top:702px">空き地を防災空地に転用。</div>
<div class="bx br" style="left:700px;top:714px;width:143px;height:43px"><b>空き地の買い上げ</b><br>マネジメント組織による買い上げ。</div>
<div class="bx cr" style="left:860px;top:697px;width:138px;height:43px"><b>こどもなんたら開催</b><br>遊び場としての認知拡大が目的。</div>
<div class="bx cr" style="left:860px;top:743px;width:138px;height:35px"><b>フキダシマーケット開催</b><br>地域住民への意識づけが目的。</div>
<div class="bx br" style="left:1028px;top:710px;width:200px;height:44px;padding-left:20px;line-height:13px;padding-top:5px"><b>フキダシの整備</b><br>マネジメント組織を中心に<br>子どもたちが集う広場</div>
<div class="num" style="left:1001px;top:762px">12</div><div class="nm" style="left:1027px;top:768px">ひめるフキダシ</div>
<div class="bx cr" style="left:1012px;top:779px;width:220px;height:18px;padding-top:0;padding-left:25px;font-size:6px">ひめたフキダシとして様々な可能</div>
<div class="rd" style="left:843px;top:781px">永瀬邸を改修し、</div>
<div class="num" style="left:766px;top:788px">7</div><div class="nm" style="left:790px;top:795px">まねくフキダシ</div><div class="rd" style="left:838px;top:793px">レストラン、資料館、花屋を設ける。</div>
<div class="bx cr" style="left:775px;top:804px;width:197px;height:45px;padding-top:6px">中庭の整備を行い、門の開放。<br>立ち入ることができる空間だと認知してもらう。</div>
<div class="bx cr" style="left:1003px;top:810px;width:230px;height:39px;padding-top:4px">屋外での映画上映会、小規模<br>人々に愛される場所になって</div>
<div class="num" style="left:801px;top:860px">2</div><div class="nm" style="left:825px;top:867px">かなでるフキダシ</div><div class="rd" style="left:885px;top:865px">既存の音楽スタジオを活用し、アーティストの拠点に。</div>
<div class="bx cr" style="left:810px;top:878px;width:103px;height:30px;padding-top:3px;font-size:6px;line-height:12px;letter-spacing:.8px">音楽スタジオを安く貸し出し、<br>アーティストへの認知を図る。</div>
<div class="bx br" style="left:953px;top:871px;width:151px;height:31px;padding-top:3px;font-size:6px;line-height:12px;padding-left:14px">近くのアパートをフキダシ不動産が借り、<br>アーティストに安価で貸し出す。</div>
<div class="num" style="left:915px;top:904px">13</div><div class="nm" style="left:940px;top:911px">みまもるフキダシ</div><div class="rd" style="left:998px;top:909px">保育園横に親子の溜まり場をつくる。</div>
<div class="bx cr" style="left:922px;top:922px;width:161px;height:27px;padding-top:1px;font-size:6px;line-height:12px;letter-spacing:.8px">永瀬宅がなくなる。<br>建物の老朽化と住民の高齢化により空地ができる。</div>
<div class="bx cr" style="left:1098px;top:925px;width:130px;height:24px;padding-top:1px;font-size:6px;line-height:11px"><b style="font-size:6px">フキダ</b><br>下階に</div>
<div class="num" style="left:829px;top:953px">15</div><div class="nm" style="left:858px;top:960px">まなぶフキダシ</div><div class="rd" style="left:910px;top:958px">歴史ある邸宅をこのエリアの資料館に。</div>
<div class="bx br" style="left:843px;top:967px;width:98px;height:33px;padding-top:4px;font-size:6px;line-height:12px">旧邸宅の形はそのままに、<br>土地を買い上げる。</div>
<div class="bx br" style="left:962px;top:967px;width:96px;height:33px;padding-top:4px;font-size:6px;line-height:12px;letter-spacing:.6px">市が公園横の土地を買い取る、<br>公園とともに整備を担う。</div>
<div class="num" style="left:891px;top:1008px">14</div><div class="nm" style="left:920px;top:1015px">かもすフキダシ</div><div class="rd" style="left:962px;top:1013px">車が入ることができない路地に、道に拡張で</div>
<div class="bx br" style="left:900px;top:1027px;width:183px;height:28px;padding-top:1px;font-size:6px;line-height:12px;letter-spacing:.6px"><b style="font-size:6.5px">フキダシ集合住宅</b><br>現状の空き地に下階に店舗をかまえる集合住宅を建てる。</div>
<div class="bx cr" style="left:1105px;top:1030px;width:120px;height:25px;font-size:6px;line-height:10px">一階<br>みち</div>
<div class="num" style="left:947px;top:1062px">6</div><div class="nm" style="left:975px;top:1069px">とどまるフキダシ</div><div class="rd" style="left:1030px;top:1067px">本一通り沿いにまちの案内</div>
<div class="bx gr" style="left:962px;top:1075px;width:135px;height:35px;padding-top:1px;font-size:6px;line-height:11px;letter-spacing:.6px"><b style="font-size:6.5px">フキダシ案内所</b><br>蔵を街の案内所として暫定利用。<br>街の中心部の一つとしての機能を果たす。</div>
<div class="bx gr" style="left:1108px;top:1078px;width:120px;height:32px"></div>
<div class="num" style="left:1094px;top:1117px">8</div>
<div class="bx gr" style="left:1102px;top:1135px;width:125px;height:27px;font-size:6px;line-height:11px">所有<br>共同</div>

<!-- flow diagram -->
<div class="t" style="left:614px;top:1113px;font-size:8.5px;font-weight:bold;letter-spacing:2px;color:#333">フローの概略図</div>
<div class="a" style="left:606px;top:1129px;width:474px;height:295px;border:1px dashed #c5949c"></div>
<div class="col" style="left:615px"><div class="h">第１期<br>土地の確保ときっかけの種まき</div><div class="p">住民の意識づけ。経済的補助を受け<br>ながら、核となるフキダシを形成。</div></div>
<div class="col" style="left:770px"><div class="h">第２期<br>資金調達とネットワークの構築</div><div class="p">本一通りに蘇り始めた商店を中心に、<br>小さな経済圏が生まれ、連鎖する。</div></div>
<div class="col" style="left:925px"><div class="h">第３期<br>活力の源になっていく</div><div class="p">開発との折り合いをつけるものとして<br>のフキダシ。経済的に自立していく。</div></div>
<svg class="a" style="left:600px;top:1100px" width="480" height="330">
<polygon points="19,124 468,124 468,181 108,181" fill="#e3c5b4" stroke="#999" stroke-width=".6"/>
<polygon points="117,186 468,186 468,244 200,244" fill="#c2d8ae" stroke="#999" stroke-width=".6"/>
<polygon points="211,249 468,249 468,307 303,307" fill="#98cdd0" stroke="#999" stroke-width=".6"/>
<path d="M32,160 L226,291" stroke="#222" stroke-width="1.3"/><polygon points="226,297 232,283 218,288" fill="#222"/>
<g font-size="8.5" font-weight="bold" fill="#444" letter-spacing="2"><text x="103" y="155">フキダシのコモン化</text><text x="195" y="218">フキダシ経済圏の創造</text><text x="296" y="282">開発と共生するフキダシ</text></g>
<g font-size="8.5" fill="#444" letter-spacing="2" text-anchor="middle"><text x="90" y="251">方向性に従って</text><text x="90" y="268">順に計画を進めていく。</text></g>
</svg>
<div class="t" style="left:1090px;top:1260px;font-size:8.5px;font-weight:bold;letter-spacing:2px">土地の</div>
<div class="a" style="left:1088px;top:1273px;width:140px;height:151px;border:1px solid #aaa"></div>
<div class="t" style="left:1095px;top:1280px;font-size:7.5px;letter-spacing:1.6px;line-height:14px;color:#555">土地の<br>ちづく<br>人】が<br>定利用<br>の買い</div>
<div class="a" style="left:1093px;top:1355px;width:130px;height:62px;background:#e8e8e9"></div>
<div class="t" style="left:1113px;top:1380px;font-size:9px;font-weight:bold;color:#444">個</div>
</body></html>
